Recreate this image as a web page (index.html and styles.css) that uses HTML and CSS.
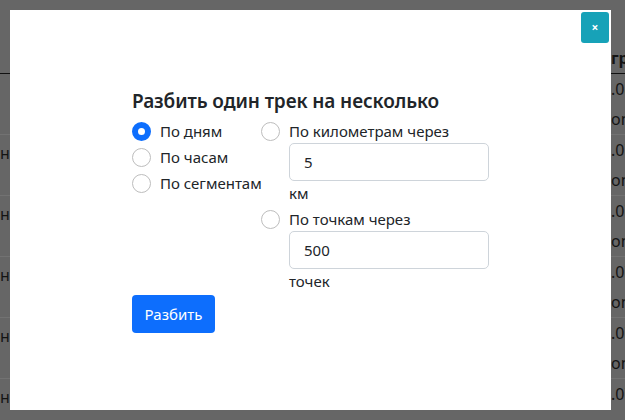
FILE: index.html
```html
<!DOCTYPE html>
<html lang="ru">
<head>
<meta charset="utf-8">
<title>Разбить трек</title>
<link rel="stylesheet" href="styles.css">
</head>
<body>
<div class="page">
  <div class="thead">
    <span class="cell-left"></span>
    <span class="cell-right head">гр</span>
  </div>
  <div class="trow"><span class="cell-left"></span><span class="cell-right"><span>.08</span><span>on</span></span></div>
  <div class="trow"><span class="cell-left">ни</span><span class="cell-right"><span>.07</span><span>on</span></span></div>
  <div class="trow"><span class="cell-left">ни</span><span class="cell-right"><span>.07</span><span>on</span></span></div>
  <div class="trow"><span class="cell-left">ни</span><span class="cell-right"><span>.07</span><span>on</span></span></div>
  <div class="trow"><span class="cell-left">ни</span><span class="cell-right"><span>.07</span><span>on</span></span></div>
  <div class="trow"><span class="cell-left">ни</span><span class="cell-right"><span>.07</span><span>gpx</span></span></div>
</div>

<div class="modal">
  <button class="close" type="button">×</button>
  <div class="modal-body">
    <h5 class="title">Разбить один трек на несколько</h5>
    <div class="options">
      <div class="col col-first">
        <label class="check"><input type="radio" name="mode" checked><span>По дням</span></label>
        <label class="check"><input type="radio" name="mode"><span>По часам</span></label>
        <label class="check"><input type="radio" name="mode"><span>По сегментам</span></label>
      </div>
      <div class="col col-second">
        <label class="check"><input type="radio" name="mode"><span>По километрам через</span></label>
        <div class="field">
          <input class="control" type="text" value="5">
          <div class="unit">км</div>
        </div>
        <label class="check"><input type="radio" name="mode"><span>По точкам через</span></label>
        <div class="field">
          <input class="control" type="text" value="500">
          <div class="unit">точек</div>
        </div>
      </div>
    </div>
    <button class="btn" type="button">Разбить</button>
  </div>
</div>
</body>
</html>
```

FILE: styles.css
```css
* { box-sizing: border-box; }
html, body {
  margin: 0;
  padding: 0;
  width: 625px;
  height: 420px;
  overflow: hidden;
  background: #666666;
  font-family: "Noto Sans", "Open Sans", sans-serif;
  color: #212529;
}

.page {
  width: 625px;
  color: #141414;
  font-size: 16px;
}
.thead {
  height: 74px;
  border-bottom: 1px solid #111;
  display: flex;
  justify-content: space-between;
  align-items: flex-end;
  padding-bottom: 3px;
}
.trow {
  height: 61px;
  border-bottom: 1px solid #727272;
  display: flex;
  justify-content: space-between;
}
.cell-left {
  width: 14px;
  text-align: right;
  overflow: hidden;
  white-space: nowrap;
  padding-top: 6px;
  line-height: 24px;
}
.cell-right {
  width: 14px;
  display: flex;
  flex-direction: column;
  line-height: 30px;
  white-space: nowrap;
  overflow: hidden;
  padding-top: 0;
}
.cell-right.head {
  font-weight: 700;
  line-height: 24px;
}

.modal {
  position: absolute;
  top: 10px;
  left: 10px;
  width: 601px;
  height: 400px;
  background: #fff;
}
.close {
  position: absolute;
  top: 2px;
  right: 2px;
  width: 28px;
  height: 31px;
  border: 0;
  border-radius: 3px;
  background: #17a2b8;
  color: #fff;
  font-family: "Noto Sans", sans-serif;
  font-size: 12px;
  font-weight: 700;
  padding: 0;
  line-height: 31px;
}
.modal-body {
  padding: 79px 0 0 122px;
}
.title {
  margin: 0 0 6px;
  font-size: 19px;
  font-weight: 600;
  line-height: 24px;
  letter-spacing: -0.1px;
}
.options {
  display: flex;
}
.col { display: flex; flex-direction: column; }
.col-first { width: 129px; }
.col-first .check { margin-bottom: 2px; }
.check {
  display: flex;
  align-items: center;
  height: 24px;
  font-size: 15px;
  white-space: nowrap;
}
.check input {
  appearance: none;
  -webkit-appearance: none;
  margin: 0 9px 0 0;
  width: 19px;
  height: 19px;
  border-radius: 50%;
  border: 1px solid #bdbdbd;
  background: #fff;
  flex: none;
}
.check input:checked {
  border: 6px solid #0d6efd;
}
.field {
  padding-left: 28px;
  margin-bottom: 2px;
}
.control {
  display: block;
  width: 200px;
  height: 38px;
  border: 1px solid #ced4da;
  border-radius: 5px;
  padding: 0 12px 0 14px;
  font-family: inherit;
  font-size: 15px;
  color: #212529;
}
.unit {
  font-size: 15px;
  line-height: 24px;
}
.btn {
  margin-top: 0;
  height: 38px;
  width: 83px;
  border: 0;
  border-radius: 4px;
  background: #0d6efd;
  color: #fff;
  font-family: inherit;
  font-size: 15px;
  padding: 0;
}
```
